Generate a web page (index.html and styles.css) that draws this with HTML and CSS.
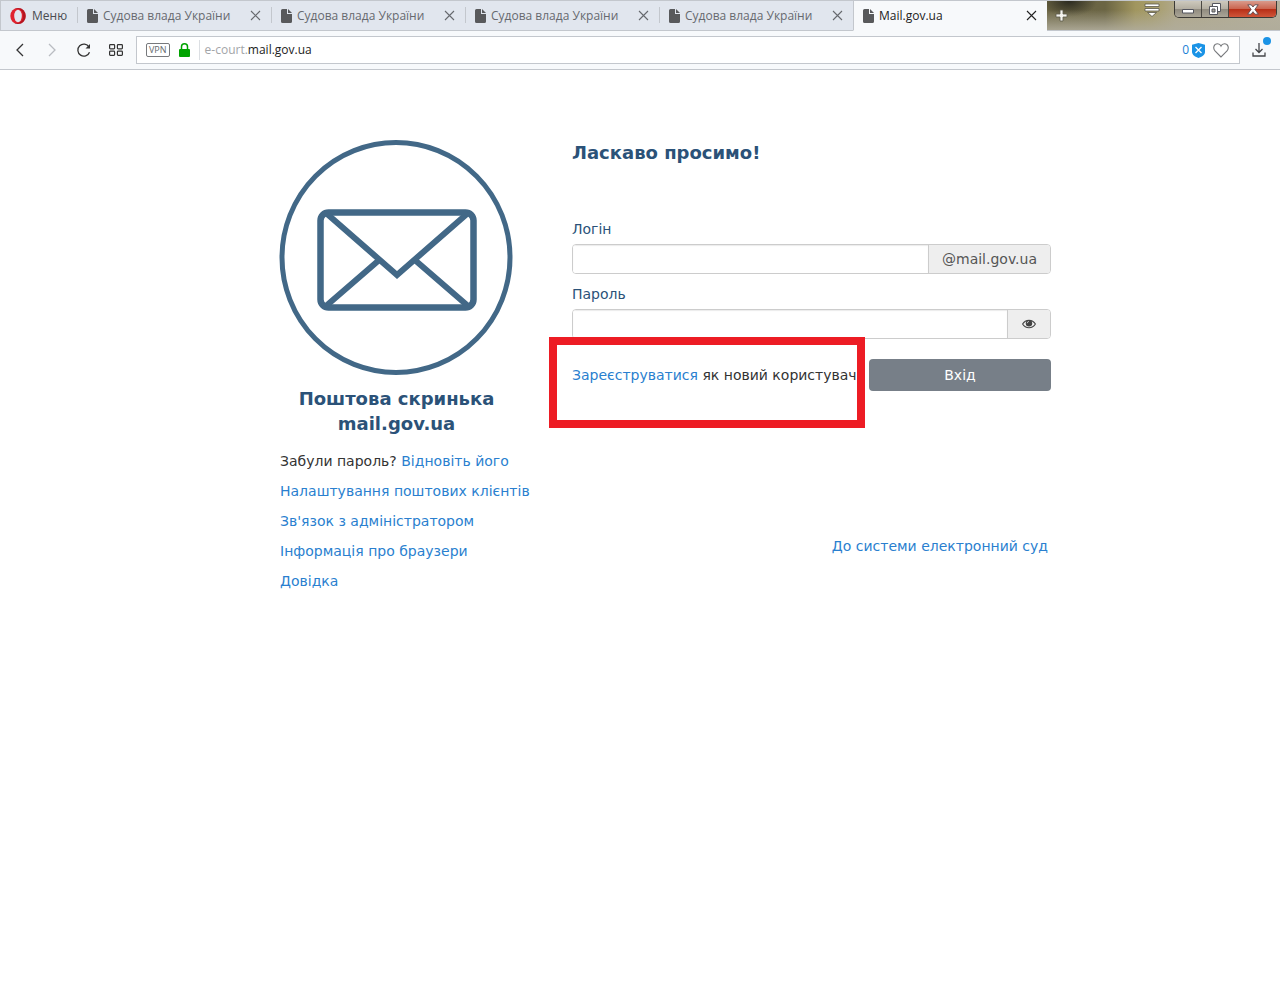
FILE: index.html
```
<!DOCTYPE html>
<html lang="uk">
<head>
    <meta charset="UTF-8">
    <meta name="viewport" content="width=device-width, initial-scale=1.0">
    <title>Mail.gov.ua</title>
    <link rel="stylesheet" href="styles.css">
</head>
<body>
    <svg class="symbols" aria-hidden="true">
        <symbol id="doc" viewBox="0 0 11 14"><path d="M1.500 0H6v5h5v7.500a1.500 1.500 0 0 1-1.500 1.500h-8A1.500 1.500 0 0 1 0 12.500v-11A1.500 1.500 0 0 1 1.500 0z" fill="#58595b"/><path d="M7 0l4 4H7z" fill="#58595b"/></symbol>
        <symbol id="cross" viewBox="0 0 11 11"><path d="M1 1l9 9M10 1l-9 9" fill="none" stroke="currentColor" stroke-width="1.1"/></symbol>
    </svg>

    <header class="browser">
        <div class="tabs">
            <button class="menu">
                <svg width="16" height="16" viewBox="0 0 16 16"><ellipse cx="8" cy="8" rx="7.700" ry="8" fill="#e0222e"/><path fill="#a5121c" d="M8 0c4.500 0 7.700 3.500 7.700 8s-3.200 8-7.700 8c-1.400 0-2.500-.4-3.200-1 3.500.6 8.200-.6 8.200-7S8.300.4 4.800 1C5.500.4 6.600 0 8 0z" opacity=".75"/><ellipse cx="8" cy="8" rx="3.800" ry="6.200" fill="#e1e6ee"/></svg>
                Меню
            </button>
            <div class="tab">
                <svg class="doc"><use href="#doc"/></svg>
                <span>Судова влада України</span>
                <button class="close" aria-label="Закрити"><svg><use href="#cross"/></svg></button>
            </div>
            <div class="tab">
                <svg class="doc"><use href="#doc"/></svg>
                <span>Судова влада України</span>
                <button class="close" aria-label="Закрити"><svg><use href="#cross"/></svg></button>
            </div>
            <div class="tab">
                <svg class="doc"><use href="#doc"/></svg>
                <span>Судова влада України</span>
                <button class="close" aria-label="Закрити"><svg><use href="#cross"/></svg></button>
            </div>
            <div class="tab">
                <svg class="doc"><use href="#doc"/></svg>
                <span>Судова влада України</span>
                <button class="close" aria-label="Закрити"><svg><use href="#cross"/></svg></button>
            </div>
            <div class="tab active">
                <svg class="doc"><use href="#doc"/></svg>
                <span>Mail.gov.ua</span>
                <button class="close" aria-label="Закрити"><svg><use href="#cross"/></svg></button>
            </div>
            <div class="titlebar">
                <button class="new-tab" aria-label="Нова вкладка">
                    <svg width="13" height="13" viewBox="0 0 13 13"><path d="M5 1h3v4h4v3H8v4H5V8H1V5h4z" fill="#f4f3ee" stroke="#5b584a" stroke-width=".8"/></svg>
                </button>
                <button class="tab-menu" aria-label="Меню вкладок">
                    <svg width="16" height="14" viewBox="0 0 16 14"><path d="M1 1h14v2.500H1zM1 5.500h14V8H1zM3.500 9.500h9L8 13.500z" fill="#fff" stroke="#5b584a" stroke-width=".8"/></svg>
                </button>
                <div class="window-buttons">
                    <button class="minimize" aria-label="Згорнути">
                        <svg width="12" height="12" viewBox="0 0 12 12"><path d="M.5 6.500h11v3.500H.5z" fill="#fff" stroke="#55565e"/></svg>
                    </button>
                    <button class="restore" aria-label="Відновити">
                        <svg width="12" height="12" viewBox="0 0 12 12"><path d="M3.500.5h8v8h-8z" fill="#fff" stroke="#55565e"/><path d="M.5 3.500h8v8h-8z" fill="#fff" stroke="#55565e"/><path d="M3 6h3v3H3z" fill="#aaa59a" stroke="#55565e"/></svg>
                    </button>
                    <button class="quit" aria-label="Закрити вікно">
                        <svg width="12" height="11" viewBox="0 0 12 11"><path d="M.8.800h3.400L6 3 7.800.8h3.400L7.900 5.400l3.400 4.800H7.900L6 7.700l-1.900 2.500H.7l3.400-4.800z" fill="#fff" stroke="#5b4a50" stroke-width=".9"/></svg>
                    </button>
                </div>
            </div>
        </div>

        <div class="toolbar">
            <button aria-label="Назад"><svg width="16" height="16" viewBox="0 0 16 16"><path d="M11 2L5 8l6 6" fill="none" stroke="#333" stroke-width="1.300"/></svg></button>
            <button aria-label="Вперед"><svg width="16" height="16" viewBox="0 0 16 16"><path d="M5 2l6 6-6 6" fill="none" stroke="#b9bcc1" stroke-width="1.300"/></svg></button>
            <button aria-label="Оновити"><svg width="16" height="16" viewBox="0 0 16 16"><path d="M13.500 10.200A6 6 0 1 1 13 5" fill="none" stroke="#333" stroke-width="1.300"/><path d="M14 2v4.500H9.500z" fill="#333"/></svg></button>
            <button aria-label="Експрес-панель"><svg width="14" height="12" viewBox="0 0 14 12"><g fill="none" stroke="#333" stroke-width="1.200"><rect x=".6" y=".6" width="5" height="4.300" rx=".8"/><rect x="8.400" y=".6" width="5" height="4.300" rx=".8"/><rect x=".6" y="7.100" width="5" height="4.300" rx=".8"/><rect x="8.400" y="7.100" width="5" height="4.300" rx=".8"/></g></svg></button>
            <div class="address">
                <span class="vpn">VPN</span>
                <svg class="lock" width="11" height="14" viewBox="0 0 11 14"><path d="M2.500 7V3.800a3 3 0 0 1 6 0V7" fill="none" stroke="#00a300" stroke-width="1.500"/><rect y="6" width="11" height="8" rx="1" fill="#00a300"/></svg>
                <label class="subdomain" for="url">e-court.</label>
                <input id="url" type="text" value="mail.gov.ua">
                <span class="blocked">0</span>
                <svg class="shield" width="13" height="15" viewBox="0 0 13 15"><path d="M6.500 0L13 1.700V9c0 3-3.500 5-6.500 6C3.500 14 0 12 0 9V1.700z" fill="#1a93e6"/><path d="M3.500 4l6 6M9.500 4l-6 6" stroke="#fff" stroke-width="1.300"/></svg>
                <svg width="16" height="15" viewBox="0 0 16 15"><path d="M8 14L2 8C-.5 5 1 .8 4.500.8 6.300.8 7.500 1.800 8 3 8.500 1.800 9.700.8 11.500.8 15 .8 16.500 5 14 8z" fill="none" stroke="#77797c" stroke-width="1.100"/></svg>
            </div>
            <button class="downloads" aria-label="Завантаження">
                <svg width="14" height="14" viewBox="0 0 14 14"><path d="M7 0v9M3.500 6L7 9.500 10.500 6M1 9.500V13h12V9.500" fill="none" stroke="#44464a" stroke-width="1.300"/></svg>
            </button>
        </div>
    </header>

    <main class="content">
        <section class="info">
            <svg class="logo" viewBox="0 0 233 235" fill="none" stroke="#426887">
                <ellipse cx="116" cy="117.500" rx="114" ry="115" stroke-width="5"/>
                <rect x="40.500" y="72.500" width="153" height="95" rx="8" stroke-width="6.500"/>
                <path d="M46 73l71 62 71-62" stroke-width="6"/>
                <path d="M46 166l52-45M188 166l-52-45" stroke-width="6"/>
            </svg>
            <h2>Поштова скринька mail.gov.ua</h2>
            <ul>
                <li>Забули пароль? <a href="#">Відновіть його</a></li>
                <li><a href="#">Налаштування поштових клієнтів</a></li>
                <li><a href="#">Зв'язок з адміністратором</a></li>
                <li><a href="#">Інформація про браузери</a></li>
                <li><a href="#">Довідка</a></li>
            </ul>
        </section>

        <section class="login">
            <h2>Ласкаво просимо!</h2>
            <form>
                <label for="login">Логін</label>
                <div class="input-group">
                    <input id="login" type="text">
                    <span class="addon">@mail.gov.ua</span>
                </div>
                <label for="password">Пароль</label>
                <div class="input-group">
                    <input id="password" type="password">
                    <button class="addon" type="button" aria-label="Показати пароль">
                        <svg width="14" height="10" viewBox="0 0 14 10"><path d="M.6 5C3.500.1 10.500.1 13.400 5 10.500 9.900 3.500 9.900.6 5z" fill="none" stroke="#444" stroke-width="1.100"/><circle cx="7" cy="4.300" r="3.200" fill="#444"/><path d="M5.200 4.200A1.900 1.900 0 0 1 7 2.400" fill="none" stroke="#eee" stroke-width=".7"/></svg>
                    </button>
                </div>
                <div class="actions">
                    <p class="register"><a href="#">Зареєструватися</a> як новий користувач</p>
                    <button class="submit" type="submit">Вхід</button>
                </div>
            </form>
            <a class="court" href="#">До системи електронний суд</a>
        </section>
    </main>
</body>
</html>
```
FILE: styles.css
```
* {
    margin: 0;
    padding: 0;
    box-sizing: border-box;
}

body {
    font-family: Verdana, "DejaVu Sans", sans-serif;
    font-size: 14px;
    line-height: 20px;
    color: #333;
    background: #fff;
}

button {
    border: none;
    background: none;
    font: inherit;
    color: inherit;
    cursor: pointer;
}

a {
    color: #2a7fcf;
    text-decoration: none;
}

a:hover {
    text-decoration: underline;
}

.symbols {
    display: none;
}

/* browser */

.browser {
    font-family: "Segoe UI", "Open Sans", sans-serif;
    font-size: 12px;
}

.tabs {
    display: flex;
    height: 31px;
    background: #e1e6ee;
    border-top: 1px solid #c3c7cd;
}

.menu {
    display: flex;
    align-items: center;
    gap: 6px;
    width: 77px;
    padding-left: 9px;
    border-left: 1px solid #c3c7cd;
    border-bottom: 1px solid #c3c7cd;
    color: #4a4c50;
}

.tab {
    display: flex;
    flex: 0 1 194px;
    align-items: center;
    padding: 0 10px;
    border-bottom: 1px solid #c3c7cd;
    background: linear-gradient(#c3c7cd, #c3c7cd) no-repeat 0 6px / 1px 16px;
    color: #66696e;
    white-space: nowrap;
}

.tab span {
    flex: 1;
    overflow: hidden;
}

.tab.active {
    padding-left: 9px;
    background: #f7f9fb;
    border-left: 1px solid #c3c7cd;
    border-bottom-color: #f7f9fb;
    color: #222;
}

.doc {
    width: 11px;
    height: 14px;
    margin-right: 5px;
}

.close,
.close svg {
    display: block;
    width: 11px;
    height: 11px;
}

.titlebar {
    display: flex;
    flex: 1;
    align-items: flex-start;
    background:
        linear-gradient(rgba(176, 172, 155, 0) 30%, rgba(176, 172, 155, 0.9)),
        radial-gradient(ellipse 28px 16px at 22px 0, #2b2a20, rgba(43, 42, 32, 0)),
        linear-gradient(90deg, #6a6443, #6b6544 25%, #a1965f 38%, #a69c68 45%, #b0a88a 55%, #b5b09d);
    border-bottom: 1px solid #c3c7cd;
}

.new-tab {
    height: 29px;
    padding: 0 8px;
}

.new-tab svg,
.tab-menu svg {
    display: block;
}

.tab-menu {
    margin: 2px 14px 0 auto;
}

.window-buttons {
    display: flex;
    height: 17px;
    margin-right: 3px;
    border: 1px solid #3c3a36;
    border-top: none;
    border-radius: 0 0 5px 5px;
    overflow: hidden;
}

.window-buttons button {
    display: flex;
    align-items: center;
    justify-content: center;
    width: 27px;
    background: linear-gradient(#cdc9bd, #b4afa2 48%, #8f8a7e 50%, #aaa597);
    border-right: 1px solid #4a4843;
}

.window-buttons .quit {
    width: 47px;
    background: linear-gradient(#d99a8b, #cb6550 48%, #b62d16 50%, #d0563a);
    border-right: none;
}

.toolbar {
    display: flex;
    align-items: center;
    height: 39px;
    padding-left: 4px;
    background: #f7f9fb;
    border-bottom: 1px solid #c3c7cd;
}

.toolbar button {
    display: flex;
    align-items: center;
    justify-content: center;
    width: 32px;
    height: 32px;
}

.address {
    display: flex;
    flex: 1;
    align-items: center;
    height: 28px;
    margin-left: 4px;
    padding: 0 10px 0 9px;
    background: #fff;
    border: 1px solid #c3c7cd;
}

.vpn {
    padding: 0 2px;
    border: 1px solid #77797c;
    border-radius: 2px;
    color: #66696e;
    font-size: 9px;
    line-height: 12px;
}

.lock {
    margin: 0 9px;
}

.subdomain {
    padding-left: 5px;
    border-left: 1px solid #dcdfe3;
    color: #a3a5a8;
}

.address input {
    flex: 1;
    min-width: 0;
    border: none;
    outline: none;
    background: none;
    font: inherit;
    color: #222;
}

.blocked {
    color: #1a7fd6;
}

.shield {
    margin: 0 8px 0 3px;
}

.toolbar .downloads {
    position: relative;
    width: 40px;
    padding-right: 2px;
}

.downloads::after {
    content: "";
    position: absolute;
    top: 3px;
    right: 9px;
    width: 8px;
    height: 8px;
    border-radius: 50%;
    background: #1a93e6;
}

/* page */

.content {
    display: grid;
    grid-template-columns: 233px 1fr;
    gap: 59px;
    max-width: 822px;
    margin: 0 auto;
    padding: 70px 0 0 51px;
}

h2 {
    color: #2b5278;
    font-size: 18px;
    line-height: 25px;
}

.logo {
    display: block;
    width: 100%;
    overflow: visible;
}

.info h2 {
    margin: 11px 0 10px;
    text-align: center;
}

.info ul {
    list-style: none;
    line-height: 30px;
    white-space: nowrap;
}

.login form {
    margin: 54px 0 145px;
}

.login label {
    display: block;
    margin-bottom: 5px;
    color: #2b5278;
}

.input-group {
    display: flex;
    height: 30px;
    margin-bottom: 10px;
    border: 1px solid #ccc;
    border-radius: 4px;
    overflow: hidden;
}

.input-group input {
    flex: 1;
    min-width: 0;
    padding: 0 12px;
    border: none;
    outline: none;
    box-shadow: inset 0 1px 1px rgba(0, 0, 0, 0.08);
    font: inherit;
}

.addon {
    display: flex;
    align-items: center;
    padding: 0 13px;
    background: #eee;
    border-left: 1px solid #ccc;
    color: #555;
}

button.addon {
    padding: 0 14px;
}

.actions {
    display: flex;
    align-items: center;
    justify-content: space-between;
    margin-top: 20px;
}

.register {
    position: relative;
    white-space: nowrap;
}

/* red frame around the registration link */
.register::before {
    content: "";
    position: absolute;
    top: -28px;
    left: -23px;
    box-sizing: border-box;
    width: 316px;
    height: 91px;
    border: 8px solid #ed1c24;
    pointer-events: none;
}

.submit {
    width: 182px;
    height: 32px;
    background: #777f88;
    border-radius: 4px;
    color: #fff;
}

.court {
    display: block;
    padding-right: 3px;
    text-align: right;
}
```
